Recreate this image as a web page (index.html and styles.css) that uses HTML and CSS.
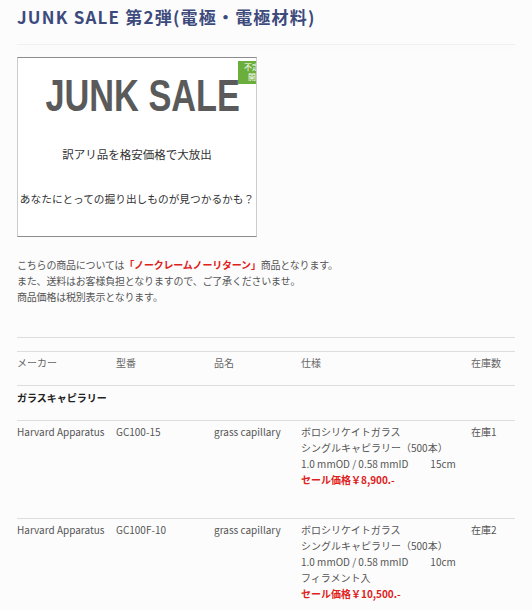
FILE: index.html
```html
<!DOCTYPE html>
<html lang="ja">
<head>
  <meta charset="UTF-8"/>
  <title>JUNK SALE 第2弾</title>
  <link rel="stylesheet" href="styles.css">
</head>
<body>
  <div class="page">
    <h1 class="page-title">JUNK SALE 第2弾(電極・電極材料)</h1>
    <div class="title-rule"></div>

    <!-- バナー -->
    <div class="banner">
      <div class="banner-badge">不定期<br>開催</div>
      <div class="banner-logo"><span>JUNK SALE</span></div>
      <p class="banner-lead">訳アリ品を格安価格で大放出</p>
      <p class="banner-sub">あなたにとっての掘り出しものが見つかるかも？</p>
    </div>

    <p class="notice">
      こちらの商品については<strong>「ノークレームノーリターン」</strong>商品となります。<br>
      また、送料はお客様負担となりますので、ご了承くださいませ。<br>
      商品価格は税別表示となります。
    </p>

    <hr class="sep">

    <table class="stock">
      <thead>
        <tr>
          <th class="c-maker">メーカー</th>
          <th class="c-model">型番</th>
          <th class="c-name">品名</th>
          <th class="c-spec">仕様</th>
          <th class="c-stock">在庫数</th>
        </tr>
      </thead>
      <tbody>
        <tr class="cat">
          <td colspan="5">ガラスキャピラリー</td>
        </tr>
        <tr>
          <td>Harvard Apparatus</td>
          <td>GC100-15</td>
          <td>grass capillary</td>
          <td>ボロシリケイトガラス<br>シングルキャピラリー（500本）<br>1.0 mmOD / 0.58 mmID<span class="len">15cm</span><br><span class="price">セール価格￥8,900.-</span><br>&nbsp;</td>
          <td>在庫1</td>
        </tr>
        <tr>
          <td>Harvard Apparatus</td>
          <td>GC100F-10</td>
          <td>grass capillary</td>
          <td>ボロシリケイトガラス<br>シングルキャピラリー（500本）<br>1.0 mmOD / 0.58 mmID<span class="len">10cm</span><br>フィラメント入<br><span class="price">セール価格￥10,500.-</span><br>&nbsp;</td>
          <td>在庫2</td>
        </tr>
      </tbody>
    </table>
  </div>
</body>
</html>
```

FILE: styles.css
```css
/* === base === */
* { margin:0; padding:0; box-sizing:border-box; }
html, body { width:100%; height:100%; overflow:hidden; }
body {
  background:#fcfcfc;
  color:#555;
  font-family:"Noto Sans CJK JP", "Noto Sans", sans-serif;
  font-size:10px;
  line-height:16px;
}
.page { padding:0 17px; }

/* === title === */
.page-title {
  padding-top:5px;
  font-size:17px;
  line-height:24px;
  letter-spacing:1.2px;
  font-weight:bold;
  color:#3c4a7c;
}
.title-rule {
  margin-top:15px;
  height:1px;
  background:#f0f0f2;
  box-shadow:0 3px 6px rgba(0,0,0,0.06);
}

/* === banner === */
.banner {
  position:relative;
  overflow:hidden;
  margin-top:12px;
  width:240px;
  height:180px;
  background:#fff;
  border:1px solid #ccc;
  border-top-color:#8c8c8c;
  border-bottom-color:#8c8c8c;
  text-align:center;
  color:#333;
}
.banner-badge {
  position:absolute;
  top:3px; left:220px;
  width:36px; height:23px;
  background:#6cae3c;
  color:#fff;
  font-size:8px;
  line-height:10px;
  padding-top:1px;
  text-align:center;
}
.banner-logo {
  margin-top:16px;
  padding-right:10px;
  height:44px;
  white-space:nowrap;
  font-family:"Liberation Sans", Arial, sans-serif;
  font-weight:bold;
  font-size:44px;
  line-height:44px;
  color:#5a5a5a;
}
.banner-logo span { display:inline-block; transform:scaleX(0.78); }
.banner-lead { margin-top:28px; font-size:11.5px; line-height:16px; }
.banner-sub { margin-top:29px; font-size:10.7px; line-height:16px; white-space:nowrap; }

/* === notice === */
.notice { margin-top:20px; letter-spacing:-0.2px; }
.notice strong { color:#e0201a; font-weight:bold; }

/* === table === */
.sep {
  margin-top:32px;
  border:none;
  border-top:1px solid #ddd;
}
.stock {
  margin-top:13px;
  width:100%;
  border-collapse:collapse;
  border-top:1px solid #ddd;
}
.stock th, .stock td {
  text-align:left;
  vertical-align:top;
  font-weight:normal;
  padding:3px 0 14px;
  border-bottom:1px solid #ddd;
}
.stock th { color:#666; }
.c-maker { width:99px; }
.c-model { width:98px; }
.c-name { width:87px; }
.c-spec { width:170px; }
.stock .cat td { color:#222; font-weight:bold; padding-top:4px; }
.len { margin-left:22px; }
.price { color:#e0201a; font-weight:bold; }
```
